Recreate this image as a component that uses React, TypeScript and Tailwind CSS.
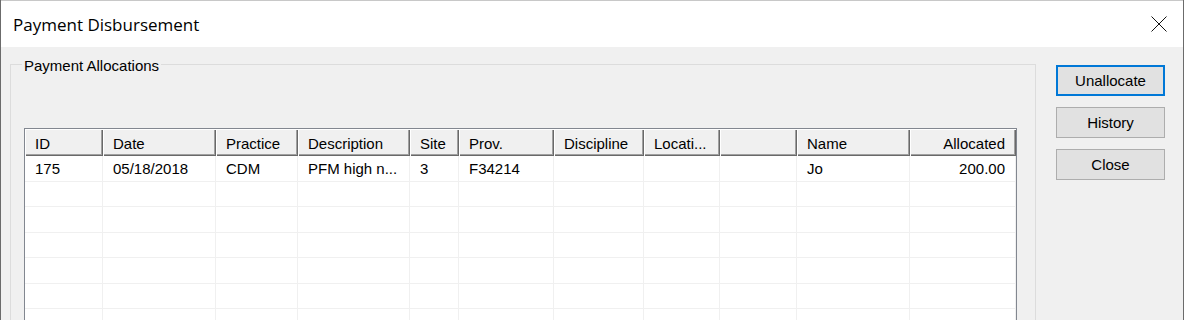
import React from 'react';

const cols = [
  { label: 'ID', w: 'w-[78px]' },
  { label: 'Date', w: 'w-[113px]' },
  { label: 'Practice', w: 'w-[82px]' },
  { label: 'Description', w: 'w-[112px]' },
  { label: 'Site', w: 'w-[49px]' },
  { label: 'Prov.', w: 'w-[95px]' },
  { label: 'Discipline', w: 'w-[90px]' },
  { label: 'Locati...', w: 'w-[76px]' },
  { label: '', w: 'w-[77px]' },
  { label: 'Name', w: 'w-[113px]' },
  { label: 'Allocated', w: 'w-[106px]', right: true },
];

const first = ['175', '05/18/2018', 'CDM', 'PFM high n...', '3', 'F34214', '', '', '', 'Jo', '200.00'];
const rowHeights = ['h-[26px]', 'h-[25px]', 'h-[26px]', 'h-[25px]', 'h-[26px]', 'h-[25px]', 'h-[26px]'];

const HeaderCell = ({ label, w, right }: { label: string; w: string; right?: boolean }) => (
  <div
    className={`${w} shrink-0 h-full flex items-center pt-[3px] bg-[#f0f0f0] shadow-[inset_1px_1px_0_#ffffff,inset_-1px_-1px_0_#696969,inset_-2px_-2px_0_#a0a0a0] ${
      right ? 'justify-end pr-[11px]' : 'pl-[10px]'
    }`}
  >
    {label}
  </div>
);

const Button = ({ label, focused }: { label: string; focused?: boolean }) => (
  <button
    className={`w-[109px] h-[31px] bg-[#e1e1e1] text-black text-[15px] leading-none ${
      focused ? 'border-2 border-[#0078d7]' : 'border border-[#adadad]'
    }`}
  >
    {label}
  </button>
);

export default function App() {
  return (
    <div className="w-[1184px] h-[320px] overflow-hidden flex flex-col border-x border-[#6b6b6b] bg-[#f0f0f0] font-['Liberation_Sans',Arial,sans-serif] text-black">
      {/* title bar */}
      <div className="h-[47px] shrink-0 bg-white flex items-center justify-between pl-[12px] pr-[16px] border-t border-[#c8c8c8]">
        <span className="font-['Open_Sans',sans-serif] text-[17px] leading-none">Payment Disbursement</span>
        <svg width="16" height="16" viewBox="0 0 16 16" className="mb-[1px]">
          <path d="M0.5 0.5 L15.5 15.5 M15.5 0.5 L0.5 15.5" stroke="#111" strokeWidth="1" />
        </svg>
      </div>

      <div className="flex flex-1 pl-[9px] pt-[8px]">
        {/* group box */}
        <fieldset className="w-[1026px] border border-[#dcdcdc] pl-[13px] shrink-0">
          <legend className="-ml-[2px] px-[2px] text-[15px] leading-[18px]">
            <span className="relative top-[2px]">Payment Allocations</span>
          </legend>

          <div className="mt-[55px] w-[993px] border border-[#828790] bg-white text-[15px]">
            <div className="flex h-[27px]">
              {cols.map((c, i) => (
                <HeaderCell key={i} label={c.label} w={c.w} right={c.right} />
              ))}
            </div>
            {rowHeights.map((h, r) => (
              <div key={r} className={`flex ${h} border-b border-[#f0f0f0]`}>
                {cols.map((c, i) => (
                  <div
                    key={i}
                    className={`${c.w} shrink-0 flex items-center pt-[1px] border-r border-[#f0f0f0] ${
                      c.right ? 'justify-end pr-[10px]' : 'pl-[10px]'
                    }`}
                  >
                    {r === 0 ? first[i] : ''}
                  </div>
                ))}
              </div>
            ))}
          </div>
        </fieldset>

        {/* buttons */}
        <div className="ml-[20px] mt-[10px] flex flex-col gap-[11px]">
          <Button label="Unallocate" focused />
          <Button label="History" />
          <Button label="Close" />
        </div>
      </div>
    </div>
  );
}
